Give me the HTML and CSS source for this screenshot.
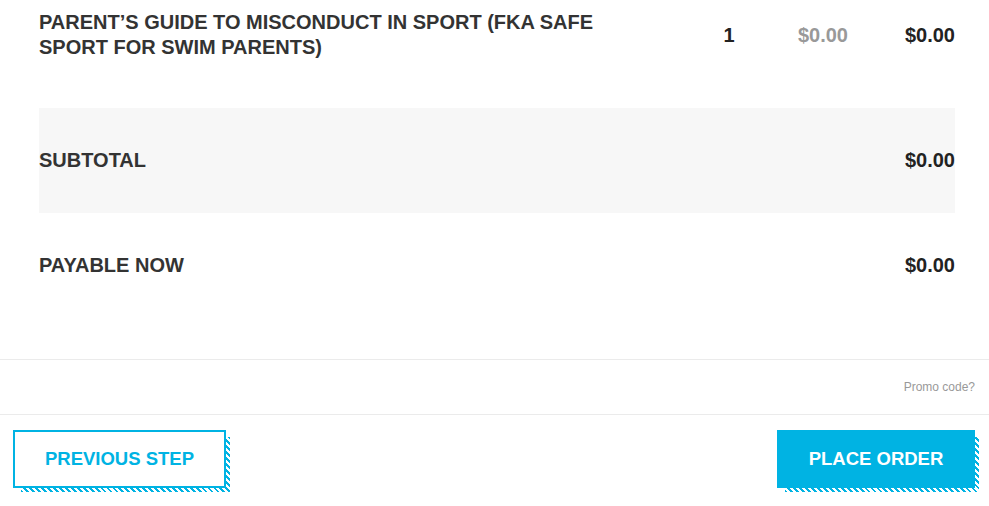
FILE: index.html
```html
<!DOCTYPE html>
<html>
<head>
<meta charset="utf-8">
<link rel="stylesheet" href="styles.css">
</head>
<body>
<div class="summary">
  <div class="item-row">
    <div class="item-title">PARENT’S GUIDE TO MISCONDUCT IN SPORT (FKA SAFE SPORT FOR SWIM PARENTS)</div>
    <div class="item-qty">1</div>
    <div class="item-price">$0.00</div>
    <div class="item-total">$0.00</div>
  </div>
  <div class="total-row subtotal">
    <div>SUBTOTAL</div>
    <div>$0.00</div>
  </div>
  <div class="total-row">
    <div>PAYABLE NOW</div>
    <div>$0.00</div>
  </div>
</div>
<div class="promo">
  <a class="promo-link">Promo code?</a>
</div>
<div class="actions">
  <div class="btn-wrap"><a class="btn btn-outline">PREVIOUS STEP</a></div>
  <div class="btn-wrap"><a class="btn btn-solid">PLACE ORDER</a></div>
</div>
</body>
</html>
```
FILE: styles.css
```css
html, body {
  margin: 0;
  padding: 0;
  background: #fff;
}
body {
  font-family: "Liberation Sans", Arial, sans-serif;
  color: #333;
}
.summary {
  padding: 0 34px 0 39px;
}
.item-row {
  display: grid;
  grid-template-columns: 1fr 80px 79px 107px;
  align-items: center;
  align-content: start;
  padding: 10px 0 0;
  height: 98px;
  font-weight: bold;
  font-size: 20px;
  line-height: 25px;
}
.item-title {
  max-width: 600px;
}
.item-qty {
  text-align: center;
  color: #222;
}
.item-price {
  text-align: right;
  color: #999;
}
.item-total {
  text-align: right;
  color: #222;
}
.total-row {
  display: flex;
  justify-content: space-between;
  align-items: center;
  height: 105px;
  font-weight: bold;
  font-size: 20px;
}
.total-row > div:last-child {
  color: #222;
}
.subtotal {
  background: #f7f7f7;
}
.promo {
  margin-top: 41px;
  border-top: 1px solid #ebebeb;
  border-bottom: 1px solid #ebebeb;
  height: 54px;
  display: flex;
  justify-content: flex-end;
  align-items: center;
  padding-right: 14px;
}
.promo-link {
  font-size: 12px;
  color: #999;
}
.actions {
  display: flex;
  justify-content: space-between;
  align-items: flex-start;
  padding: 15px 10px 18px 13px;
}
.btn-wrap {
  position: relative;
  padding: 0 4px 4px 0;
}
.btn-wrap::before {
  content: "";
  position: absolute;
  left: 8px;
  top: 7px;
  right: 0;
  bottom: 0;
  background: repeating-linear-gradient(45deg, #00b3e3 0 2px, #fff 2px 4.2px);
}
.btn {
  position: relative;
  display: flex;
  align-items: center;
  justify-content: center;
  box-sizing: border-box;
  height: 58px;
  font-weight: bold;
  font-size: 18.5px;
}
.btn-outline {
  width: 213px;
  background: #fff;
  border: 2px solid #00b3e3;
  color: #00b3e3;
}
.btn-solid {
  width: 198px;
  background: #00b3e3;
  color: #fff;
}
```
